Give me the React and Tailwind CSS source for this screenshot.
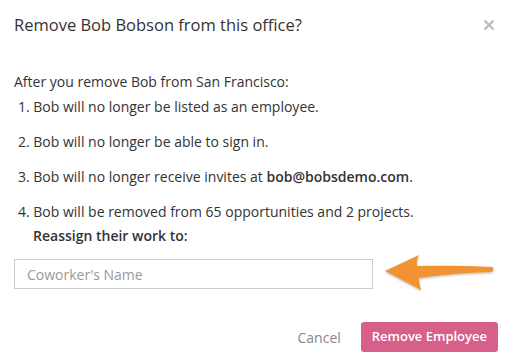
const Arrow = () => (
  <svg width="116" height="42" viewBox="0 0 116 42" className="shrink-0">
    <defs>
      <filter id="sh" x="-10%" y="-20%" width="130%" height="150%">
        <feDropShadow dx="0" dy="1" stdDeviation="1.2" floodColor="#000" floodOpacity="0.3" />
      </filter>
    </defs>
    <path
      d="M2 18 L36 2 Q33 8 34 13 Q70 12 110 14 Q111 17 109 19 Q72 20 36 25 Q36 31 38 37 Z"
      fill="#f19331"
      filter="url(#sh)"
    />
  </svg>
);

export default function App() {
  return (
    <div className="w-[516px] h-[361px] bg-white text-[#333] font-['Open_Sans',sans-serif] overflow-hidden">
      {/* header */}
      <div className="flex items-center justify-between pl-[14px] pr-[21px] pt-[13px]">
        <h1 className="text-[16.5px] leading-[24px]">Remove Bob Bobson from this office?</h1>
        <button className="text-[#bbb]" aria-label="Close">
          <svg width="12" height="12" viewBox="0 0 12 12">
            <path d="M1.5 1.5 L10.5 10.5 M10.5 1.5 L1.5 10.5" stroke="currentColor" strokeWidth="2.4" />
          </svg>
        </button>
      </div>

      {/* body */}
      <div className="px-[14px] pt-[35px] text-[14px] leading-[19px]">
        <p>After you remove Bob from San Francisco:</p>
        <ol className="pl-[4px] mt-[6px] flex flex-col gap-[16px]">
          <li>1. Bob will no longer be listed as an employee.</li>
          <li>2. Bob will no longer be able to sign in.</li>
          <li>3. Bob will no longer receive invites at <b className="font-semibold">bob@bobsdemo.com</b>.</li>
          <li>4. Bob will be removed from 65 opportunities and 2 projects.</li>
        </ol>
        <p className="font-semibold pl-[19px] mt-[5px]">Reassign their work to:</p>
        <div className="flex items-start mt-[14px]">
          <input
            className="w-[359px] h-[30px] border border-[#ccc] px-[12px] text-[14px] outline-none placeholder:text-[#999]"
            placeholder="Coworker's Name"
          />
          <div className="ml-[10px] -mt-[6px]">
            <Arrow />
          </div>
        </div>
      </div>

      {/* footer */}
      <div className="flex items-center justify-end gap-[20px] pr-[18px] mt-[27px]">
        <button className="text-[14px] text-[#888]">Cancel</button>
        <button className="h-[30px] px-[11px] rounded-[3px] bg-[#d6608a] text-white text-[13px] font-semibold">
          Remove Employee
        </button>
      </div>
    </div>
  );
}
